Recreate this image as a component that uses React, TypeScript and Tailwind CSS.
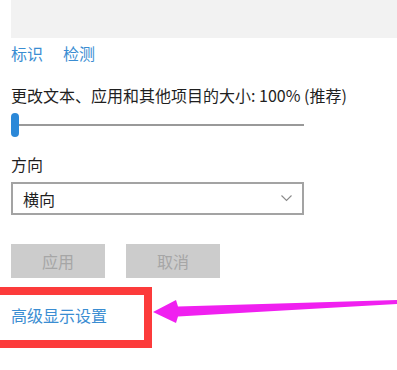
import React from 'react'

const font = { fontFamily: '"Noto Sans CJK SC", "Noto Sans", sans-serif' }

export default function App() {
  return (
    <div className="relative w-[397px] h-[370px] overflow-hidden bg-white text-[16px] leading-[20px] text-[#1f1f1f]" style={font}>
      <div className="flex flex-col pl-[11px]">
        <div className="h-[38px] bg-[#f2f2f2]" />

        {/* 标识 / 检测 */}
        <div className="mt-[5px] flex gap-[20px] text-[#3a8dd2]">
          <span>标识</span>
          <span>检测</span>
        </div>

        <div className="mt-[22px]">更改文本、应用和其他项目的大小: 100% (推荐)</div>

        {/* slider */}
        <div className="mt-[8px] flex h-[24px] w-[293px] items-center">
          <div className="h-[24px] w-[8px] rounded-[4px] bg-[#2b88d8]" />
          <div className="h-[2px] flex-1 bg-[#999999]" />
        </div>

        <div className="mt-[17px]">方向</div>

        {/* dropdown */}
        <div className="mt-[8px] flex h-[33px] w-[293px] items-center justify-between border-2 border-[#a3a3a3] pl-[10px] pr-[10px]">
          <span>横向</span>
          <svg width="11" height="7" viewBox="0 0 11 7" fill="none">
            <path d="M0.5 0.5 L5.5 5.5 L10.5 0.5" stroke="#8a8a8a" strokeWidth="1.1" />
          </svg>
        </div>

        {/* buttons */}
        <div className="mt-[29px] flex gap-[21px]">
          <div className="flex h-[34px] w-[94px] items-center justify-center bg-[#cccccc] text-[#a6a6a6]">应用</div>
          <div className="flex h-[34px] w-[94px] items-center justify-center bg-[#cccccc] text-[#a6a6a6]">取消</div>
        </div>

        <div className="mt-[27px] text-[#3a8dd2]">高级显示设置</div>
      </div>

      {/* annotation: red box */}
      <div className="absolute left-[-12px] top-[287px] h-[61px] w-[164px] border-[8px] border-[#fc3b3b]" />

      {/* annotation: arrow */}
      <svg className="absolute left-0 top-0" width="397" height="370" viewBox="0 0 397 370">
        <polygon points="153,312 176,300 178,306.5 397,300 397,304 178,316.5 176,323" fill="#f020f0" />
      </svg>
    </div>
  )
}
